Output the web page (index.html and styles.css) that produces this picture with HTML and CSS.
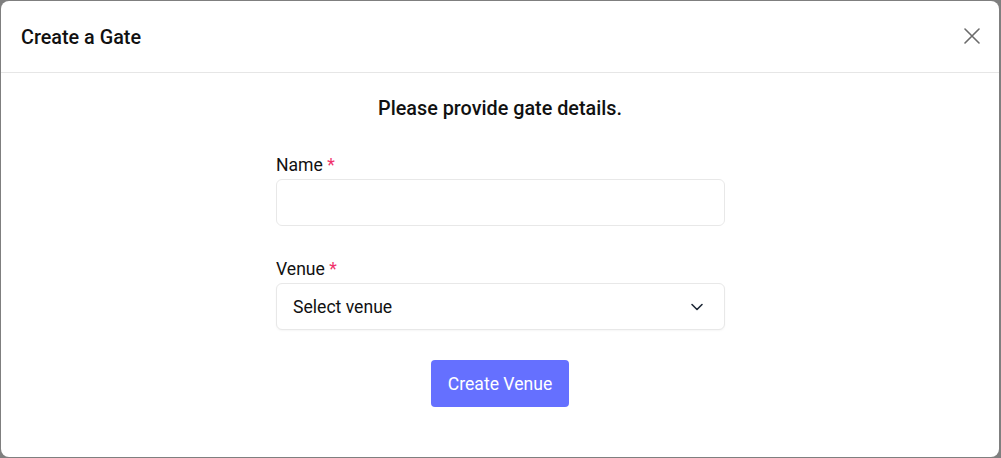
FILE: index.html
```html
<!DOCTYPE html>
<html>
<head>
<meta charset="utf-8">
<link rel="stylesheet" href="styles.css">
</head>
<body>
<div class="modal">
  <div class="modal-header">
    <h2 class="modal-title">Create a Gate</h2>
    <button class="close-btn" aria-label="Close">
      <svg width="16" height="16" viewBox="0 0 16 16"><path d="M1 1L15 15M15 1L1 15" stroke="#6b6b6b" stroke-width="1.6" stroke-linecap="round"/></svg>
    </button>
  </div>
  <div class="modal-body">
    <p class="intro">Please provide gate details.</p>
    <form class="form">
      <div class="field">
        <label class="label">Name <span class="req">*</span></label>
        <input class="input" type="text">
      </div>
      <div class="field">
        <label class="label">Venue <span class="req">*</span></label>
        <div class="select">
          <span>Select venue</span>
          <svg width="14" height="14" viewBox="0 0 14 14"><path d="M2 4.5L7 9.5L12 4.5" fill="none" stroke="#1f2937" stroke-width="1.6" stroke-linecap="round" stroke-linejoin="round"/></svg>
        </div>
      </div>
      <div class="actions">
        <button type="button" class="primary">Create Venue</button>
      </div>
    </form>
  </div>
</div>
</body>
</html>
```
FILE: styles.css
```css
* { box-sizing: border-box; }
html, body { margin: 0; height: 100%; }
body {
  background: #7f7f7f;
  padding: 1px 2px 1px 1px;
  font-family: Roboto, "Noto Sans", sans-serif;
  color: #111;
}
.modal {
  background: #fff;
  border-radius: 8px;
  height: 456px;
  overflow: hidden;
}
.modal-header {
  height: 72px;
  border-bottom: 1px solid #e6e6e6;
  display: flex;
  align-items: center;
  justify-content: space-between;
  padding: 2px 20px 0 20px;
}
.modal-title {
  margin: 0;
  font-size: 19.8px;
  font-weight: 500;
  color: #111;
}
.close-btn {
  background: none;
  border: 0;
  padding: 0;
  display: flex;
  margin-top: -4px;
  margin-right: -1px;
}
.modal-body {
  display: flex;
  flex-direction: column;
  align-items: center;
  padding-top: 23px;
}
.intro {
  margin: 0;
  font-size: 19.8px;
  font-weight: 500;
  line-height: 26px;
  color: #111;
}
.form {
  width: 449px;
  margin-top: 32px;
  margin-left: 1px;
  display: flex;
  flex-direction: column;
}
.field { display: flex; flex-direction: column; margin-bottom: 32px; }
.field + .field { margin-bottom: 30px; }
.label {
  font-size: 17.6px;
  line-height: 22px;
  margin-bottom: 3px;
  color: #111;
}
.req { color: #f0336b; }
.input, .select {
  height: 47px;
  border: 1px solid #e8e8e8;
  border-radius: 6px;
  background: #fff;
  font: inherit;
}
.select {
  display: flex;
  align-items: center;
  justify-content: space-between;
  padding: 0 20px 0 16px;
  font-size: 17.6px;
  color: #111;
  box-shadow: 0 1px 2px rgba(0,0,0,0.04);
}
.actions { display: flex; justify-content: center; }
.primary {
  width: 138px;
  height: 47px;
  background: #6570ff;
  color: #fff;
  border: 0;
  border-radius: 4px;
  font-family: inherit;
  font-size: 17.6px;
  margin-left: -1px;
}
```
